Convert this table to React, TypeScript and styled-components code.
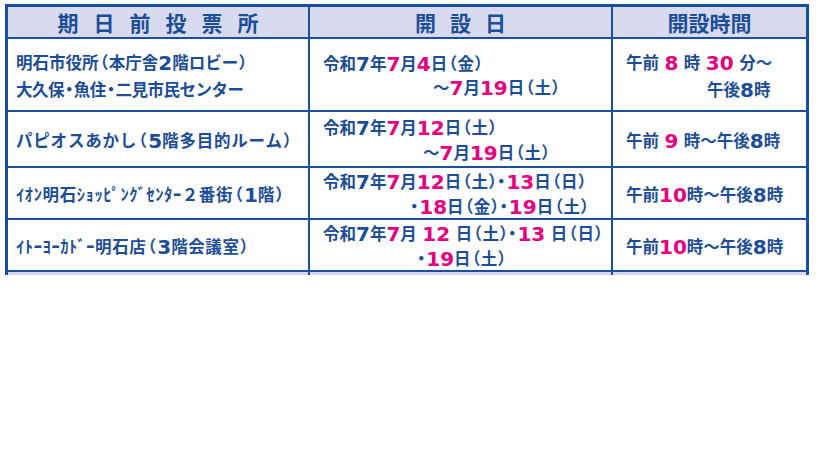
import React from "react";
import styled, { createGlobalStyle } from "styled-components";

const BLUE = "#1a4e9e";
const INK = "#1c4d98";
const PINK = "#e4007f";
const LAVENDER = "#d8dbef";

const GlobalStyle = createGlobalStyle`
  html, body {
    margin: 0;
    padding: 0;
    background: #fff;
  }
  body {
    font-family: "Noto Sans CJK JP", "Noto Sans", sans-serif;
  }
`;

const Clip = styled.div`
  margin: 4px 0 0 5px;
  width: 804px;
  height: 271px;
  overflow: hidden;
`;

const Frame = styled.div`
  display: grid;
  grid-template-columns: 300px 301px 193px;
  grid-template-rows: 30px 71px 54px 50px 50px 40px;
  gap: 2px;
  background: ${BLUE};
  border: 3px solid ${BLUE};
  border-bottom: none;
`;

const HeadCell = styled.div<{ $spacing: number }>`
  background: ${LAVENDER};
  display: flex;
  align-items: center;
  justify-content: center;
  color: ${INK};
  font-size: 21px;
  font-weight: 700;
  letter-spacing: ${(p) => p.$spacing}px;
  padding-left: ${(p) => p.$spacing}px;
  white-space: nowrap;
`;

const Cell = styled.div<{ $pad: number; $lh: number }>`
  background: #fff;
  display: flex;
  flex-direction: column;
  justify-content: center;
  padding-left: ${(p) => p.$pad}px;
  padding-top: 2px;
  color: ${INK};
  font-size: 16.5px;
  font-weight: 700;
  line-height: ${(p) => p.$lh}px;
  white-space: nowrap;
`;

const Line = styled.span<{ $indent?: number; $track?: number }>`
  display: block;
  padding-left: ${(p) => p.$indent ?? 0}px;
  letter-spacing: ${(p) => p.$track ?? 0}px;
`;

const Num = styled.span<{ $pink?: boolean }>`
  font-family: "DejaVu Sans", "Liberation Sans", sans-serif;
  font-size: 20px;
  vertical-align: -1px;
  letter-spacing: 0;
  word-spacing: -1.5px;
  color: ${(p) => (p.$pink ? PINK : "inherit")};
`;

// brackets and middle dots are set proportionally, as in the print
const Punct = styled.span`
  font-feature-settings: "palt";
  padding: 0 1px;
`;

const Strip = styled.div`
  background: ${LAVENDER};
`;

// "[..]" marks a pink run; plain digits get the wide latin face
function rich(text: string) {
  const parts: React.ReactNode[] = [];
  const re = /\[([^\]]+)\]|[0-9 ]+|[（）・]+|[^\[0-9 （）・]+/g;
  let m: RegExpExecArray | null;
  let i = 0;
  while ((m = re.exec(text))) {
    const s = m[0];
    if (m[1] !== undefined) parts.push(<Num key={i++} $pink>{m[1]}</Num>);
    else if (/^[0-9 ]+$/.test(s)) parts.push(<Num key={i++}>{s}</Num>);
    else if (/^[（）・]+$/.test(s)) parts.push(<Punct key={i++}>{s}</Punct>);
    else parts.push(s);
  }
  return parts;
}

type Ln = { t: string; indent?: number; track?: number };
type Row = { place: Ln[]; dates: Ln[]; hours: Ln[]; placeLh?: number; dateLh?: number };

const rows: Row[] = [
  {
    place: [{ t: "明石市役所（本庁舎2階ロビー）" }, { t: "大久保・魚住・二見市民センター", track: -0.5 }],
    dates: [{ t: "令和7年[7]月[4]日（金）" }, { t: "～[7]月[19]日（土）", indent: 110 }],
    hours: [{ t: "午前 [8] 時 [30] 分～" }, { t: "午後8時", indent: 81 }],
    placeLh: 26,
    dateLh: 23,
  },
  {
    place: [{ t: "パピオスあかし（5階多目的ルーム）", track: 0.8 }],
    dates: [{ t: "令和7年[7]月[12]日（土）" }, { t: "～[7]月[19]日（土）", indent: 100 }],
    hours: [{ t: "午前 [9] 時～午後8時" }],
  },
  {
    place: [{ t: "ｲｵﾝ明石ｼｮｯﾋﾟﾝｸﾞｾﾝﾀｰ２番街（1階）", track: 0.6 }],
    dates: [{ t: "令和7年[7]月[12]日（土）・[13]日（日）" }, { t: "・[18]日（金）・[19]日（土）", indent: 86 }],
    hours: [{ t: "午前[10]時～午後8時" }],
  },
  {
    place: [{ t: "ｲﾄｰﾖｰｶﾄﾞｰ明石店（3階会議室）", track: 0.6 }],
    dates: [{ t: "令和7年[7]月 [12] 日（土）・[13] 日（日）" }, { t: "・[19]日（土）", indent: 93 }],
    hours: [{ t: "午前[10]時～午後8時" }],
  },
];

const lines = (ls: Ln[]) =>
  ls.map((l, i) => (
    <Line key={i} $indent={l.indent} $track={l.track}>
      {rich(l.t)}
    </Line>
  ));

export default function App() {
  return (
    <>
      <GlobalStyle />
      <Clip>
        <Frame>
          <HeadCell $spacing={15}>期日前投票所</HeadCell>
          <HeadCell $spacing={14}>開設日</HeadCell>
          <HeadCell $spacing={0}>開設時間</HeadCell>
          {rows.map((r, i) => (
            <React.Fragment key={i}>
              <Cell $pad={8} $lh={r.placeLh ?? 24}>{lines(r.place)}</Cell>
              <Cell $pad={13} $lh={r.dateLh ?? 24}>{lines(r.dates)}</Cell>
              <Cell $pad={13} $lh={r.placeLh ?? 24}>{lines(r.hours)}</Cell>
            </React.Fragment>
          ))}
          <Strip />
          <Strip />
          <Strip />
        </Frame>
      </Clip>
    </>
  );
}
